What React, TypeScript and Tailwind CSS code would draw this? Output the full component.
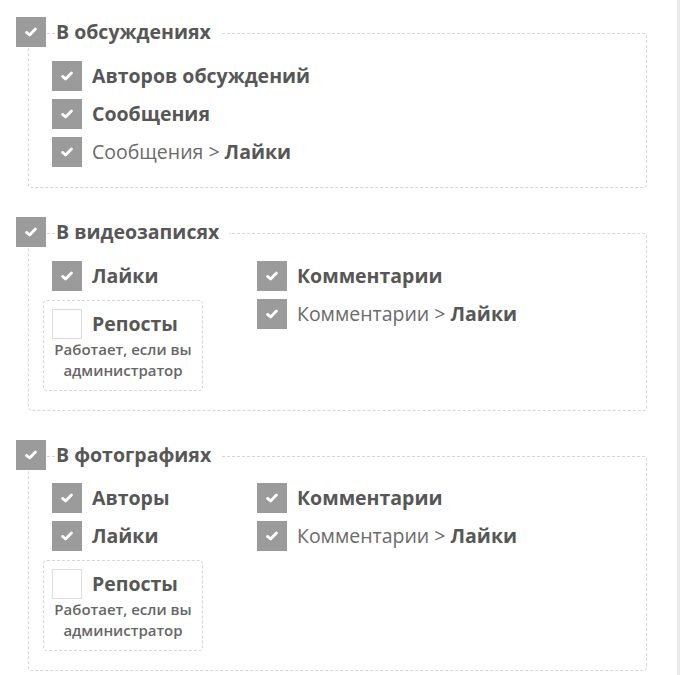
import type { ReactNode } from "react";

const font = { fontFamily: '"Open Sans", "Noto Sans", sans-serif' };

function Box({ checked = true }: { checked?: boolean }) {
  if (!checked) {
    return <span className="block w-[30px] h-[30px] shrink-0 border border-[#dcdcdc] bg-white" />;
  }
  return (
    <span className="flex items-center justify-center w-[30px] h-[30px] shrink-0 bg-[#9b9b9b]">
      <svg width="12" height="10" viewBox="0 0 12 10">
        <path d="M1.6 5.4 L4.6 8 L10.4 2" fill="none" stroke="#fff" strokeWidth="2.8" strokeLinecap="round" strokeLinejoin="round" />
      </svg>
    </span>
  );
}

function Item({ children, checked = true }: { children: ReactNode; checked?: boolean }) {
  return (
    <div className="flex items-center gap-[10px] h-[30px]">
      <Box checked={checked} />
      <span className="text-[19.5px] leading-[30px] text-[#575757] whitespace-nowrap">{children}</span>
    </div>
  );
}

function Sub({ parent }: { parent: string }) {
  return (
    <Item>
      <span className="font-normal text-[#6a6a6a]">{parent} &gt; </span>
      <b className="font-bold">Лайки</b>
    </Item>
  );
}

function Reposts() {
  return (
    <div className="-ml-[9px] w-[160px] border border-dashed border-[#d6d6d6] rounded-[4px] pt-[8px] pl-[8px] pb-[9px]">
      <Item checked={false}>
        <b className="font-bold">Репосты</b>
      </Item>
      <p className="-ml-[8px] text-center text-[15px] leading-[21px] font-semibold text-[#666]">
        Работает, если вы
        <br />
        администратор
      </p>
    </div>
  );
}

function Section({ title, children, cls }: { title: string; children: ReactNode; cls: string }) {
  return (
    <section className={cls}>
      <div className="relative z-10 ml-4 flex items-center gap-[10px]">
        <Box />
        <span className="bg-white pr-[10px] text-[19.5px] leading-[30px] font-bold text-[#575757]">{title}</span>
      </div>
      <div className="ml-[28px] w-[619px] -mt-[14px] border border-dashed border-[#d6d6d6] rounded-[4px] pl-[23px]">
        {children}
      </div>
    </section>
  );
}

export default function App() {
  return (
    <div className="flex h-[675px] bg-white overflow-hidden" style={font}>
      <div className="w-[677px] pt-[17px]">
        <Section title="В обсуждениях" cls="mb-[29px] [&>div:last-child]:pt-[27px] [&>div:last-child]:pb-[20px]">
          <div className="flex flex-col gap-[8px]">
            <Item><b className="font-bold">Авторов обсуждений</b></Item>
            <Item><b className="font-bold">Сообщения</b></Item>
            <Sub parent="Сообщения" />
          </div>
        </Section>

        <Section title="В видеозаписях" cls="mb-[29px] [&>div:last-child]:pt-[27px] [&>div:last-child]:pb-[19px]">
          <div className="flex">
            <div className="w-[205px] flex flex-col gap-[9px]">
              <Item><b className="font-bold">Лайки</b></Item>
              <Reposts />
            </div>
            <div className="flex flex-col gap-[8px]">
              <Item><b className="font-bold">Комментарии</b></Item>
              <Sub parent="Комментарии" />
            </div>
          </div>
        </Section>

        <Section title="В фотографиях" cls="[&>div:last-child]:pt-[26px] [&>div:last-child]:pb-[19px]">
          <div className="flex">
            <div className="w-[205px] flex flex-col gap-[8px]">
              <Item><b className="font-bold">Авторы</b></Item>
              <Item><b className="font-bold">Лайки</b></Item>
              <div className="mt-[1px]">
                <Reposts />
              </div>
            </div>
            <div className="flex flex-col gap-[8px]">
              <Item><b className="font-bold">Комментарии</b></Item>
              <Sub parent="Комментарии" />
            </div>
          </div>
        </Section>
      </div>
      <div className="w-[3px] bg-[#ebebeb]" />
    </div>
  );
}
